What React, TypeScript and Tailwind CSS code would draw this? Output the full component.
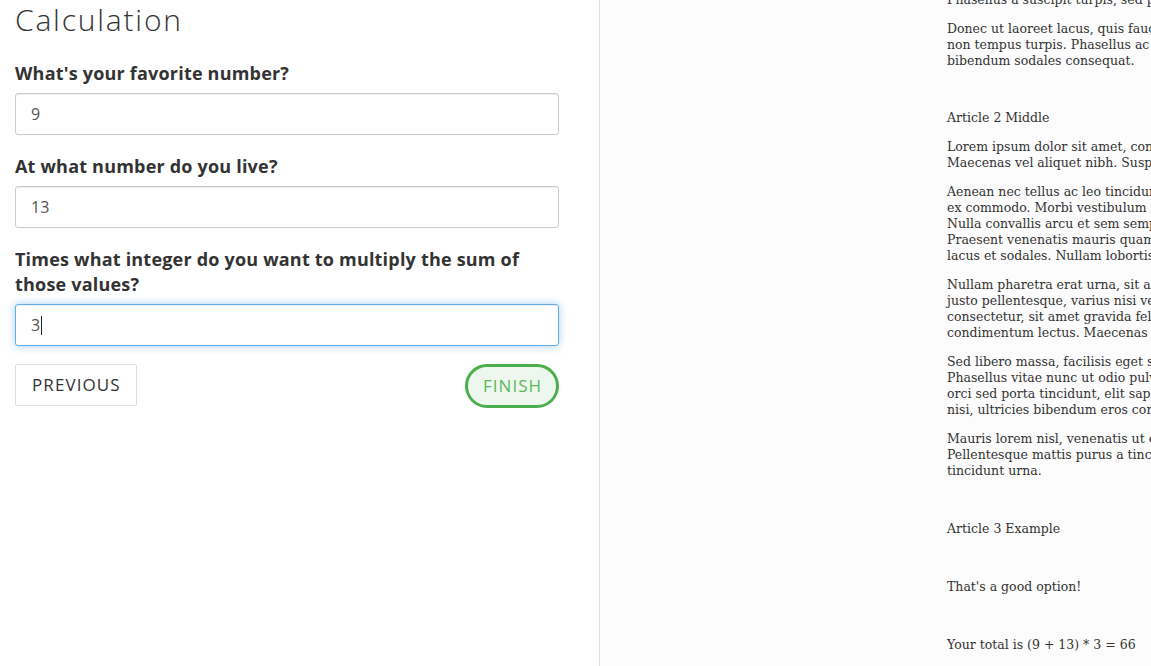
const articleOne = [
  ["Phasellus a suscipit turpis, sed pretium lorem."],
  [
    "Donec ut laoreet lacus, quis faucibus nisl. Sed",
    "non tempus turpis. Phasellus ac magna et",
    "bibendum sodales consequat.",
  ],
];

const articleTwo = [
  [
    "Lorem ipsum dolor sit amet, consectetur adipiscing.",
    "Maecenas vel aliquet nibh. Suspendisse potenti.",
  ],
  [
    "Aenean nec tellus ac leo tincidunt iaculis sed",
    "ex commodo. Morbi vestibulum ante ipsum.",
    "Nulla convallis arcu et sem semper, vitae",
    "Praesent venenatis mauris quam, non",
    "lacus et sodales. Nullam lobortis nunc.",
  ],
  [
    "Nullam pharetra erat urna, sit amet tempor",
    "justo pellentesque, varius nisi vel, dictum",
    "consectetur, sit amet gravida felis. Nunc",
    "condimentum lectus. Maecenas vel ante.",
  ],
  [
    "Sed libero massa, facilisis eget semper non,",
    "Phasellus vitae nunc ut odio pulvinar tempus",
    "orci sed porta tincidunt, elit sapien mollis",
    "nisi, ultricies bibendum eros commodo.",
  ],
  [
    "Mauris lorem nisl, venenatis ut ornare id,",
    "Pellentesque mattis purus a tincidunt mattis",
    "tincidunt urna.",
  ],
];

function Para({ lines }: { lines: string[] }) {
  return (
    <div className="mb-[13px]">
      {lines.map((l) => (
        <div key={l} className="h-4 leading-4 whitespace-nowrap">
          {l}
        </div>
      ))}
    </div>
  );
}

function Field({
  label,
  value,
  focused,
}: {
  label: React.ReactNode;
  value: string;
  focused?: boolean;
}) {
  return (
    <div>
      <label className="block text-[18px] leading-[25px] font-bold tracking-[0.2px] text-[#333]">
        {label}
      </label>
      <div
        className={
          focused
            ? "mt-[7px] h-[42px] flex items-center rounded-[3px] border border-[#66afe9] bg-white pl-[15px] text-[16px] text-[#555] shadow-[inset_0_1px_1px_rgba(0,0,0,0.075),0_0_8px_rgba(102,175,233,0.6)]"
            : "mt-[7px] h-[42px] flex items-center rounded-[3px] border border-[#ccc] bg-white pl-[15px] text-[16px] text-[#555] shadow-[inset_0_1px_1px_rgba(0,0,0,0.075)]"
        }
      >
        {value}
        {focused && <span className="ml-[1px] h-[19px] w-px bg-[#222]" />}
      </div>
    </div>
  );
}

export default function App() {
  return (
    <div className="flex h-[666px] w-full overflow-hidden bg-white">
      <div
        className="w-[600px] shrink-0 border-r border-[#e3e3e3] px-[15px]"
        style={{ fontFamily: '"Open Sans", sans-serif' }}
      >
        <div className="w-[544px]">
          <h2 className="h-10 text-[30px] leading-10 font-light tracking-[1.8px] text-[#333]">
            Calculation
          </h2>
          <div className="mt-[21px] flex flex-col gap-[19px]">
            <Field label="What's your favorite number?" value="9" />
            <Field label="At what number do you live?" value="13" />
            <Field
              label="Times what integer do you want to multiply the sum of those values?"
              value="3"
              focused
            />
          </div>
          <div className="mt-[18px] flex items-start justify-between">
            <button className="h-[42px] rounded-[2px] border border-[#ddd] bg-white pl-4 pr-[15px] text-[17px] uppercase tracking-[1.1px] text-[#333]">
              Previous
            </button>
            <button className="h-[44px] rounded-full border-[3px] border-[#4cae4c] bg-[#eef7ee] pl-[15px] pr-[14px] text-[17px] uppercase tracking-[1px] text-[#5cb85c]">
              Finish
            </button>
          </div>
        </div>
      </div>
      <div
        className="flex-1 overflow-hidden bg-[#fcfcfc] pl-[347px] text-[12.5px] text-[#333]"
        style={{ fontFamily: '"DejaVu Serif", serif' }}
      >
        <div className="-mt-2">
          {articleOne.map((p) => (
            <Para key={p[0]} lines={p} />
          ))}
          <div className="mt-[41px]">
            <Para lines={["Article 2 Middle"]} />
          </div>
          {articleTwo.map((p) => (
            <Para key={p[0]} lines={p} />
          ))}
          <div className="mt-[42px] h-4 leading-4">Article 3 Example</div>
          <div className="mt-[42px] h-4 leading-4">That's a good option!</div>
          <div className="mt-[42px] h-4 leading-4">
            Your total is (9 + 13) * 3 = 66
          </div>
        </div>
      </div>
    </div>
  );
}
